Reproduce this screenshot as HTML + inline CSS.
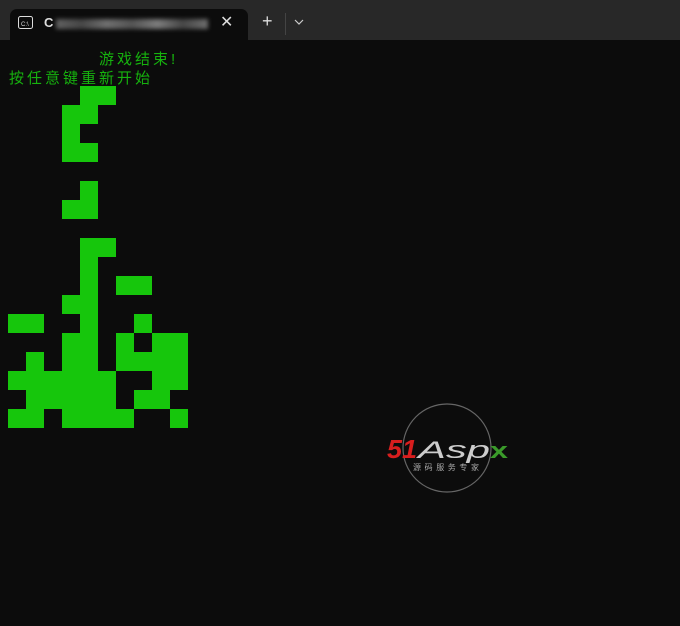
<!DOCTYPE html>
<html><head><meta charset="utf-8"><style>
body{margin:0;width:680px;height:626px;background:#0c0c0c;overflow:hidden;position:relative;font-family:"Liberation Sans","Noto Sans CJK SC",sans-serif}
.bar{position:absolute;left:0;top:0;width:680px;height:40px;background:#282828}
.tab{position:absolute;left:10px;top:9px;width:238px;height:32px;background:#0c0c0c;border-radius:7px 7px 0 0}
.ttl{position:absolute;left:44px;top:15px;color:#ddd;font-size:13px;font-weight:bold}
.blur{position:absolute;left:56px;top:19px;width:152px;height:10px;background:linear-gradient(90deg,#777,#555,#888,#666,#999,#555,#888);filter:blur(2px);opacity:.8}
.g{position:absolute;background:#16c60c;width:18px;height:19px}
.t{position:absolute;color:#16b20e;font-size:15px;letter-spacing:3px;white-space:nowrap}
</style></head><body>
<div class="bar"></div>
<div class="tab"></div>
<svg style="position:absolute;left:18px;top:16px" width="16" height="14"><rect x="0.5" y="0.5" width="14" height="12" rx="2" fill="none" stroke="#ddd"/><text x="3" y="10" font-size="6" fill="#ddd" font-family="Liberation Sans">C:\</text></svg>
<div class="ttl">C</div><div class="blur"></div>
<div style="position:absolute;left:220px;top:12px;color:#ddd;font-size:16px">✕</div>
<div style="position:absolute;left:262px;top:11px;color:#ddd;font-size:18px">+</div>
<div style="position:absolute;left:285px;top:13px;width:1px;height:22px;background:#444"></div>
<svg style="position:absolute;left:294px;top:19px" width="10" height="6"><path d="M1 1 L5 5 L9 1" stroke="#ccc" fill="none" stroke-width="1.2"/></svg>
<div class="t" style="left:99px;top:48px">游戏结束!</div>
<div class="t" style="left:9px;top:67px">按任意键重新开始</div>
<div id="grid"></div>
<script>
var rows={0:[4,5],1:[3,4],2:[3],3:[3,4],5:[4],6:[3,4],8:[4,5],9:[4],10:[4,6,7],11:[3,4],12:[0,1,4,7],13:[3,4,6,8,9],14:[1,3,4,6,7,8,9],15:[0,1,2,3,4,5,8,9],16:[1,2,3,4,5,7,8],17:[0,1,3,4,5,6,9]};
var h='';for(var r in rows)rows[r].forEach(function(c){h+='<div class="g" style="left:'+(8+18*c)+'px;top:'+(86+19*r)+'px"></div>'});
document.getElementById('grid').innerHTML=h;
</script>
<svg style="position:absolute;left:385px;top:400px" width="130" height="95">
<circle cx="62" cy="48" r="44" fill="none" stroke="#666" stroke-width="1.2"/>
<text x="2" y="58" font-size="26" font-weight="bold" font-style="italic" fill="#d81e1e" font-family="Liberation Sans" textLength="30" lengthAdjust="spacingAndGlyphs">51</text>
<text x="33" y="58" font-size="24" font-style="italic" fill="#ccc" font-family="Liberation Sans" textLength="72" lengthAdjust="spacingAndGlyphs">Asp</text>
<text x="105" y="58" font-size="22" font-weight="bold" fill="#3a9a2a" font-family="Liberation Sans" textLength="18" lengthAdjust="spacingAndGlyphs">x</text>
<text x="28" y="70" font-size="8" fill="#aaa" font-family="Noto Sans CJK SC" textLength="66">源码服务专家</text>
</svg>
</body></html>
